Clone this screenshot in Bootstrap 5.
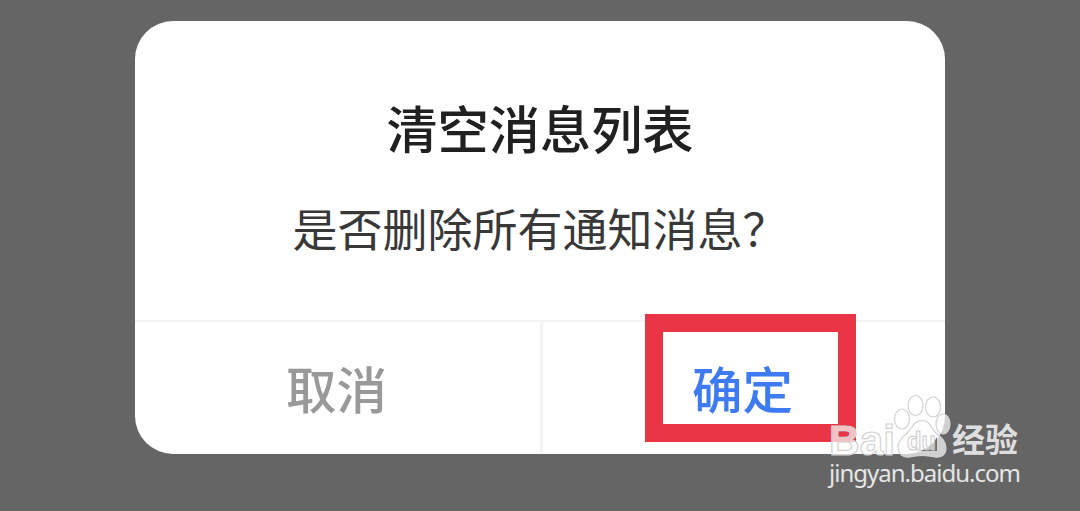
<!DOCTYPE html>
<html lang="zh-CN">
<head>
  <meta charset="UTF-8" />
  <meta name="viewport" content="width=device-width, initial-scale=1.0"/>
  <link href="https://cdn.jsdelivr.net/npm/bootstrap@5.3.5/dist/css/bootstrap.min.css" rel="stylesheet" />
  <script src="https://cdn.jsdelivr.net/npm/bootstrap@5.3.5/dist/js/bootstrap.bundle.min.js" defer></script>
  <title>清空消息列表</title>
  <style>
    body {
      background: #656565;
      height: 511px;
      overflow: hidden;
      font-family: "Noto Sans CJK SC", sans-serif;
    }

    .dialog-box {
      width: 810px;
      height: 433px;
      margin-top: 21px;
      border-radius: 38px;
    }

    .dialog-text {
      height: 299px;
      padding-top: 69px;
    }

    .dialog-title {
      font-size: 51.2px;
      line-height: 74px;
      font-weight: 500;
      color: #202020;
    }

    .dialog-message {
      font-size: 45px;
      line-height: 66px;
      margin-top: 31px;
      font-weight: 400;
      color: #383838;
    }

    .dialog-actions {
      border-top: 2px solid #f3f3f3;
    }

    .dialog-btn {
      font-size: 50.5px;
      line-height: 74px;
      font-weight: 500;
      padding-top: 28px;
    }

    .btn-cancel {
      color: #999;
      padding-right: 8px;
    }

    .btn-ok {
      color: #3e7bf2;
      box-shadow: inset 3px 0 #f4f4f4;
    }

    .highlight {
      left: 645px;
      top: 314px;
      width: 211px;
      height: 128px;
      border: 18px solid #ea3546;
    }

    .watermark {
      left: 820px;
      top: 390px;
    }
  </style>
</head>
<body class="position-relative">

  <div class="dialog-box bg-white mx-auto d-flex flex-column overflow-hidden">
    <div class="dialog-text text-center">
      <div class="dialog-title">清空消息列表</div>
      <div class="dialog-message">是否删除所有通知消息？</div>
    </div>
    <div class="dialog-actions d-flex flex-grow-1">
      <button class="dialog-btn btn-cancel border-0 bg-transparent d-flex justify-content-center w-50">取消</button>
      <button class="dialog-btn btn-ok border-0 bg-transparent d-flex justify-content-center w-50">确定</button>
    </div>
  </div>

  <!-- Red frame around the confirm button -->
  <div class="highlight position-absolute"></div>

  <svg class="watermark position-absolute" width="210" height="110" viewBox="820 390 210 110">
    <g fill="#fff" fill-opacity=".7" stroke="#d2d2d2" stroke-width="1.2">
      <text x="829" y="455" font-family="Liberation Sans" font-weight="700" font-size="43" textLength="66" lengthAdjust="spacingAndGlyphs">Bai</text>
      <ellipse cx="902" cy="419" rx="7.5" ry="10"/>
      <ellipse cx="915.5" cy="405.5" rx="7.5" ry="10"/>
      <ellipse cx="933" cy="407" rx="7.5" ry="10"/>
      <ellipse cx="943" cy="424" rx="7" ry="10"/>
      <path d="M922 420.500C930 420.500 931 428 936 433C941 437 946 441 946 448C946 455 941 458 935 457C927 455 917 455 910 457C903 458 898 454 898 447C898 440 904 436 908 432C913 427 914 420.500 922 420.500Z"/>
    </g>
    <!-- corner showing through behind the letters -->
    <path d="M937 437V451H920Q932 448 937 437Z" fill="#707070"/>
    <text x="907" y="450" fill="#fff" fill-opacity=".6" stroke="#c8c8c8" stroke-width="1" font-family="Liberation Sans" font-weight="700" font-size="25" textLength="29" lengthAdjust="spacingAndGlyphs">du</text>
    <text x="952" y="452" fill="#dedede" font-weight="700" font-size="33">经验</text>
    <text x="829" y="482" fill="#e6e6e6" font-family="Noto Sans" font-size="24" textLength="192">jingyan.baidu.com</text>
  </svg>

</body>
</html>
